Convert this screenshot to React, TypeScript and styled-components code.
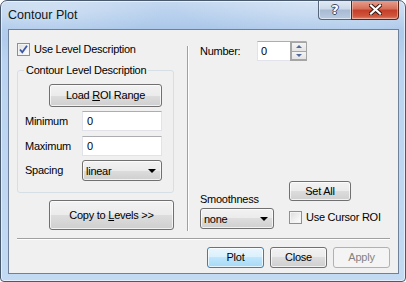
import { styled, createGlobalStyle } from 'styled-components'

const GlobalStyle = createGlobalStyle`
	html, body {
		margin: 0;
		padding: 0;
		background: #ffffff;
	}
	* {
		box-sizing: border-box;
	}
`

export default function App() {
	return (
		<>
			<GlobalStyle />
			<Window>
				<TitleBar>
					<Title>Contour Plot</Title>
					<CaptionButtons>
						<HelpButton>?</HelpButton>
						<CloseButton>
							<svg width="13" height="11" viewBox="0 0 13 11">
								<path
									d="M2 1.5 L11 9.5 M11 1.5 L2 9.5"
									stroke="#3d1a12"
									strokeWidth="4.2"
									strokeLinecap="square"
								/>
								<path
									d="M2 1.5 L11 9.5 M11 1.5 L2 9.5"
									stroke="#ffffff"
									strokeWidth="2.2"
									strokeLinecap="square"
								/>
							</svg>
						</CloseButton>
					</CaptionButtons>
				</TitleBar>
				<Body>
					<Client>
						<Main>
							<LeftColumn>
								<CheckRow>
									<CheckBox checked />
									<span>Use Level Description</span>
								</CheckRow>
								<Group>
									<GroupCaption>Contour Level Description</GroupCaption>
									<Button $width={113} $height={23} $left={24}>
										<span>
											Load <u>R</u>OI Range
										</span>
									</Button>
									<FieldRow $top={4}>
										<FieldLabel>Minimum</FieldLabel>
										<TextBox>0</TextBox>
									</FieldRow>
									<FieldRow $top={5}>
										<FieldLabel>Maximum</FieldLabel>
										<TextBox>0</TextBox>
									</FieldRow>
									<FieldRow $top={4}>
										<FieldLabel>Spacing</FieldLabel>
										<Combo $width={80}>linear</Combo>
									</FieldRow>
								</Group>
								<Button $width={125} $height={30} $left={32} $top={7}>
									<span>
										Copy to <u>L</u>evels &gt;&gt;
									</span>
								</Button>
							</LeftColumn>
							<VSeparator />
							<RightColumn>
								<NumberRow>
									<NumberLabel>Number:</NumberLabel>
									<SpinBox>
										<SpinValue>0</SpinValue>
										<SpinButtons>
											<SpinArrow $up />
											<SpinArrow />
										</SpinButtons>
									</SpinBox>
								</NumberRow>
								<BottomControls>
									<SmoothCol>
										<span>Smoothness</span>
										<Combo $width={74}>none</Combo>
									</SmoothCol>
									<SetCol>
										<Button $width={62} $height={20}>
											Set All
										</Button>
										<CheckRow $top={10}>
											<CheckBox />
											<span>Use Cursor ROI</span>
										</CheckRow>
									</SetCol>
								</BottomControls>
							</RightColumn>
						</Main>
						<HSeparator />
						<Footer>
							<Button $width={57} $height={21} $variant="default">
								Plot
							</Button>
							<Button $width={57} $height={21}>
								Close
							</Button>
							<Button $width={57} $height={21} $variant="disabled">
								Apply
							</Button>
						</Footer>
					</Client>
				</Body>
			</Window>
		</>
	)
}

function CheckBox({ checked }: { checked?: boolean }) {
	return (
		<CheckBoxBox>
			{checked && (
				<svg width="11" height="11" viewBox="0 0 11 11">
					<path
						d="M2 5.5 L4.3 8.3 L9 1.8"
						fill="none"
						stroke="#3c56a6"
						strokeWidth="1.8"
					/>
				</svg>
			)}
		</CheckBoxBox>
	)
}

function Combo({ children, $width }: { children: string; $width: number }) {
	return (
		<ComboBox $width={$width}>
			<span>{children}</span>
			<ComboArrow />
		</ComboBox>
	)
}

const Window = styled.div`
	width: 406px;
	height: 282px;
	display: flex;
	flex-direction: column;
	border: 1px solid #4a5a6e;
	border-radius: 7px 7px 4px 4px;
	background:
		radial-gradient(ellipse 160px 40px at 330px 0px, rgba(255, 255, 255, 0.35), transparent),
		radial-gradient(ellipse 120px 30px at 40px 10px, rgba(255, 255, 255, 0.3), transparent),
		linear-gradient(180deg, #c4d8f0 0px, #abc8ea 28px, #bad3f0 60px, #c3daf3 100%);
	box-shadow: inset 0 0 0 1px rgba(255, 255, 255, 0.55);
	font-family: 'Liberation Sans', Arial, sans-serif;
	font-size: 11px;
	letter-spacing: -0.25px;
	color: #000000;
	overflow: hidden;
`

const TitleBar = styled.div`
	height: 28px;
	display: flex;
	justify-content: space-between;
	align-items: flex-start;
	padding: 0 6px 0 7px;
`

const Title = styled.div`
	font-family: 'Liberation Sans', Arial, sans-serif;
	font-size: 12.5px;
	letter-spacing: 0;
	line-height: 15px;
	margin-top: 7px;
	color: #101820;
`

const CaptionButtons = styled.div`
	display: flex;
	margin-top: -1px;
`

const HelpButton = styled.div`
	width: 33px;
	height: 20px;
	border: 1px solid #56657a;
	border-right: none;
	border-top: none;
	border-radius: 0 0 0 4px;
	background: linear-gradient(180deg, #e4ecf6 0%, #ccd9e9 45%, #a9bbd3 55%, #b9cbe1 100%);
	box-shadow: inset 0 0 0 1px rgba(255, 255, 255, 0.5);
	display: flex;
	justify-content: center;
	align-items: center;
	color: #ffffff;
	font-family: 'DejaVu Sans', sans-serif;
	font-weight: bold;
	font-size: 13px;
	text-shadow: -1px 0 #3e4a5a, 1px 0 #3e4a5a, 0 -1px #3e4a5a, 0 1px #3e4a5a;
`

const CloseButton = styled.div`
	width: 48px;
	height: 20px;
	border: 1px solid #5a2417;
	border-top: none;
	border-radius: 0 0 4px 0;
	background: linear-gradient(180deg, #e8a493 0%, #d7705a 45%, #c4402a 55%, #d0553c 85%, #e0886e 100%);
	box-shadow: inset 0 0 0 1px rgba(255, 255, 255, 0.35);
	display: flex;
	justify-content: center;
	align-items: center;
`

const Body = styled.div`
	flex: 1;
	display: flex;
	padding: 0 6px 7px 7px;
`

const Client = styled.div`
	flex: 1;
	display: flex;
	flex-direction: column;
	background: #f0f0f0;
	border: 1px solid #6f809a;
	padding: 11px 8px 5px 8px;
`

const Main = styled.div`
	height: 189px;
	display: flex;
`

const LeftColumn = styled.div`
	width: 157px;
	display: flex;
	flex-direction: column;
	align-items: flex-start;
`

const CheckRow = styled.label<{ $top?: number }>`
	display: flex;
	align-items: center;
	gap: 4px;
	height: 13px;
	margin-top: ${(p) => p.$top ?? 2}px;
	line-height: 13px;
	white-space: nowrap;
`

const CheckBoxBox = styled.span`
	width: 13px;
	height: 13px;
	flex: none;
	border: 1px solid #8e8f8f;
	background: linear-gradient(135deg, #dcdcdc 0%, #f2f2f2 60%, #ffffff 100%);
	box-shadow: inset 0 0 0 1px #f4f4f4;
	display: flex;
	justify-content: center;
	align-items: center;
`

const Group = styled.div`
	position: relative;
	width: 157px;
	margin-top: 14px;
	border: 1px solid #d5dfe5;
	border-radius: 3px;
	padding: 13px 7px 11px 7px;
	display: flex;
	flex-direction: column;
	align-items: flex-start;
`

const GroupCaption = styled.span`
	position: absolute;
	top: -8px;
	left: 6px;
	padding: 0 2px;
	background: #f0f0f0;
	line-height: 14px;
	white-space: nowrap;
`

const Button = styled.div<{
	$width: number
	$height: number
	$left?: number
	$top?: number
	$variant?: 'default' | 'disabled'
}>`
	width: ${(p) => p.$width}px;
	height: ${(p) => p.$height}px;
	flex: none;
	margin-left: ${(p) => p.$left ?? 0}px;
	margin-top: ${(p) => p.$top ?? 0}px;
	display: flex;
	justify-content: center;
	align-items: center;
	border: 1px solid
		${(p) => (p.$variant === 'default' ? '#3c7fb1' : p.$variant === 'disabled' ? '#adb2b5' : '#707070')};
	border-radius: 3px;
	background: ${(p) =>
		p.$variant === 'default'
			? 'linear-gradient(180deg, #eaf6fd 0%, #d9f0fc 50%, #bee6fd 50%, #a7d9f5 100%)'
			: p.$variant === 'disabled'
			? '#f4f4f4'
			: 'linear-gradient(180deg, #f2f2f2 0%, #ebebeb 50%, #dddddd 50%, #cfcfcf 100%)'};
	box-shadow: inset 0 0 0 1px
		${(p) => (p.$variant === 'disabled' ? '#f4f4f4' : 'rgba(255, 255, 255, 0.7)')};
	color: ${(p) => (p.$variant === 'disabled' ? '#838383' : '#000000')};
	white-space: nowrap;
	padding-bottom: 1px;

	u {
		text-underline-offset: 1px;
	}
`

const FieldRow = styled.div<{ $top: number }>`
	display: flex;
	align-items: center;
	margin-top: ${(p) => p.$top}px;
`

const FieldLabel = styled.span`
	width: 57px;
	padding-bottom: 1px;
`

const TextBox = styled.div`
	width: 80px;
	height: 20px;
	background: #ffffff;
	border: 1px solid #e2e3ea;
	border-top-color: #abadb3;
	padding: 0 4px;
	line-height: 18px;
`

const ComboBox = styled.div<{ $width: number }>`
	width: ${(p) => p.$width}px;
	height: 21px;
	display: flex;
	align-items: center;
	justify-content: space-between;
	padding: 0 5px 0 3px;
	border: 1px solid #707070;
	border-radius: 3px;
	background: linear-gradient(180deg, #f2f2f2 0%, #ebebeb 50%, #dddddd 50%, #cfcfcf 100%);
	box-shadow: inset 0 0 0 1px rgba(255, 255, 255, 0.7);
`

const ComboArrow = styled.span`
	width: 0;
	height: 0;
	border-left: 4px solid transparent;
	border-right: 4px solid transparent;
	border-top: 4px solid #000000;
`

const VSeparator = styled.div`
	width: 1px;
	margin: 5px 12px -1px 13px;
	background: #a0a0a0;
	box-shadow: 1px 0 0 #ffffff;
`

const RightColumn = styled.div`
	flex: 1;
	display: flex;
	flex-direction: column;
	justify-content: space-between;
`

const NumberRow = styled.div`
	display: flex;
	align-items: center;
`

const NumberLabel = styled.span`
	width: 57px;
	padding-bottom: 1px;
`

const SpinBox = styled.div`
	width: 50px;
	height: 20px;
	display: flex;
	background: #ffffff;
	border: 1px solid #e2e3ea;
	border-top-color: #abadb3;
`

const SpinValue = styled.div`
	flex: 1;
	padding: 0 3px;
	line-height: 18px;
`

const SpinButtons = styled.div`
	width: 17px;
	display: flex;
	flex-direction: column;
	border: 1px solid #a5a5a5;
	border-top: none;
	border-right: none;
	margin: 0 -1px -1px 0;
	background: #a5a5a5;
	gap: 1px;
	padding: 1px;
`

const SpinArrow = styled.div<{ $up?: boolean }>`
	flex: 1;
	display: flex;
	justify-content: center;
	align-items: center;
	background: linear-gradient(180deg, #f4f4f4 0%, #e4e4e4 100%);

	&::before {
		content: '';
		width: 0;
		height: 0;
		border-left: 3px solid transparent;
		border-right: 3px solid transparent;
		${(p) => (p.$up ? 'border-bottom: 3px solid #56689a;' : 'border-top: 3px solid #56689a;')}
	}
`

const BottomControls = styled.div`
	display: flex;
	align-items: flex-end;
	gap: 15px;
	margin-bottom: 1px;
`

const SmoothCol = styled.div`
	display: flex;
	flex-direction: column;
	gap: 3px;
`

const SetCol = styled.div`
	display: flex;
	flex-direction: column;
	padding-bottom: 5px;
`

const HSeparator = styled.div`
	height: 1px;
	margin-top: 8px;
	background: #a0a0a0;
	box-shadow: 0 1px 0 #ffffff;
`

const Footer = styled.div`
	display: flex;
	justify-content: flex-end;
	gap: 6px;
	margin-top: 8px;
`
